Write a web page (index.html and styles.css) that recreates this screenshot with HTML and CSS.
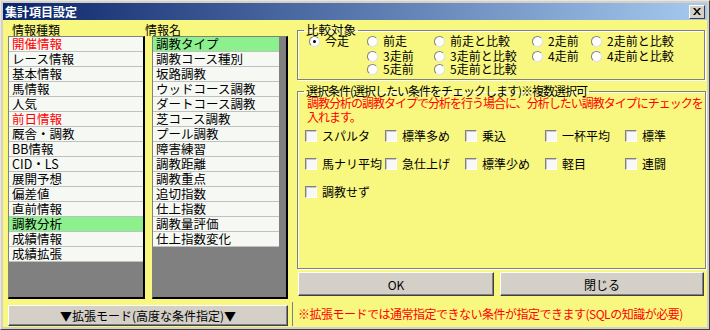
FILE: index.html
```html
<!DOCTYPE html>
<html lang="ja">
<head>
  <meta charset="UTF-8" />
  <title>集計項目設定</title>
  <link rel="stylesheet" href="styles.css">
</head>
<body>
  <div class="window">
    <div class="titlebar">
      <span class="title">集計項目設定</span>
      <span class="close">
        <svg width="8" height="7" viewBox="0 0 8 7"><path d="M0 0h2l2 2.5L6 0h2L5 3.5 8 7H6L4 4.5 2 7H0l3-3.5z" fill="#000"/></svg>
      </span>
    </div>

    <div class="client">
      <div class="left-pane">
        <div class="lists">
          <div class="col col-kind">
            <div class="col-label">情報種類</div>
            <ul class="listbox">
              <li class="red">開催情報</li>
              <li>レース情報</li>
              <li>基本情報</li>
              <li>馬情報</li>
              <li>人気</li>
              <li class="red">前日情報</li>
              <li>厩舎・調教</li>
              <li>BB情報</li>
              <li>CID・LS</li>
              <li>展開予想</li>
              <li>偏差値</li>
              <li>直前情報</li>
              <li class="selected">調教分析</li>
              <li>成績情報</li>
              <li>成績拡張</li>
            </ul>
          </div>
          <div class="col col-name">
            <div class="col-label">情報名</div>
            <ul class="listbox">
              <li class="selected">調教タイプ</li>
              <li>調教コース種別</li>
              <li>坂路調教</li>
              <li>ウッドコース調教</li>
              <li>ダートコース調教</li>
              <li>芝コース調教</li>
              <li>プール調教</li>
              <li>障害練習</li>
              <li>調教距離</li>
              <li>調教重点</li>
              <li>追切指数</li>
              <li>仕上指数</li>
              <li>調教量評価</li>
              <li>仕上指数変化</li>
            </ul>
          </div>
        </div>
        <button class="btn ext-btn" type="button">▼拡張モード(高度な条件指定)▼</button>
      </div>

      <div class="right-pane">
        <fieldset class="group group-compare">
          <legend>比較対象</legend>
          <div class="radio-grid">
            <label class="opt"><span class="radio checked"></span>今走</label>
            <label class="opt"><span class="radio"></span>前走</label>
            <label class="opt"><span class="radio"></span>前走と比較</label>
            <label class="opt"><span class="radio"></span>2走前</label>
            <label class="opt"><span class="radio"></span>2走前と比較</label>
            <span></span>
            <label class="opt"><span class="radio"></span>3走前</label>
            <label class="opt"><span class="radio"></span>3走前と比較</label>
            <label class="opt"><span class="radio"></span>4走前</label>
            <label class="opt"><span class="radio"></span>4走前と比較</label>
            <span></span>
            <label class="opt"><span class="radio"></span>5走前</label>
            <label class="opt"><span class="radio"></span>5走前と比較</label>
          </div>
        </fieldset>

        <fieldset class="group group-cond">
          <legend>選択条件(選択したい条件をチェックします)※複数選択可</legend>
          <p class="desc">調教分析の調教タイプで分析を行う場合に、分析したい調教タイプにチェックを<br>入れます。</p>
          <div class="check-grid">
            <label class="opt"><span class="check"></span>スパルタ</label>
            <label class="opt"><span class="check"></span>標準多め</label>
            <label class="opt"><span class="check"></span>乗込</label>
            <label class="opt"><span class="check"></span>一杯平均</label>
            <label class="opt"><span class="check"></span>標準</label>
            <label class="opt"><span class="check"></span>馬ナリ平均</label>
            <label class="opt"><span class="check"></span>急仕上げ</label>
            <label class="opt"><span class="check"></span>標準少め</label>
            <label class="opt"><span class="check"></span>軽目</label>
            <label class="opt"><span class="check"></span>連闘</label>
            <label class="opt"><span class="check"></span>調教せず</label>
          </div>
        </fieldset>

        <div class="actions">
          <button class="btn ok-btn" type="button">OK</button>
          <button class="btn close-btn" type="button">閉じる</button>
        </div>

        <div class="note">※拡張モードでは通常指定できない条件が指定できます(SQLの知識が必要)</div>
      </div>
    </div>
  </div>
</body>
</html>
```

FILE: styles.css
```css
body {
  margin: 0;
  font-family: "Noto Sans CJK JP", "Noto Sans", sans-serif;
  font-size: 12px;
  color: #000;
}
.window {
  width: 710px;
  height: 330px;
  box-sizing: border-box;
  background: #d4d0c8;
  border: 1px solid;
  border-color: #e8e6e0 #404040 #404040 #e8e6e0;
  padding: 2px;
  display: flex;
  flex-direction: column;
}
.titlebar {
  height: 17px;
  flex-shrink: 0;
  background: linear-gradient(to right, #0a246a, #a6caf0);
  display: flex;
  align-items: center;
  justify-content: space-between;
  padding: 0 2px 0 2px;
  box-sizing: border-box;
}
.title {
  color: #fff;
  font-weight: 700;
  font-size: 12px;
  line-height: 14px;
}
.close {
  width: 16px;
  height: 14px;
  box-sizing: border-box;
  background: #d4d0c8;
  border: 1px solid;
  border-color: #fff #404040 #404040 #fff;
  display: flex;
  align-items: center;
  justify-content: center;
}
.client {
  flex: 1;
  background: #f8f880;
  display: flex;
  padding: 3px 2px 0 5px;
  box-sizing: border-box;
}

/* left side: two list boxes */
.left-pane {
  width: 280px;
  display: flex;
  flex-direction: column;
}
.lists {
  display: flex;
}
.col-label {
  height: 13px;
  line-height: 13px;
}
.col-kind {
  width: 137px;
}
.col-kind .col-label {
  padding-left: 4px;
}
.col-name {
  width: 143px;
}
.col-name .listbox {
  margin-left: 7px;
  width: 136px;
}
.col-name .listbox li {
  width: 126px;
}
.listbox {
  list-style: none;
  margin: 0;
  padding: 0;
  height: 263px;
  box-sizing: border-box;
  background: #808080;
  border-style: solid;
  border-width: 1px 2px 2px 1px;
  border-color: #808080 #000 #000 #808080;
  overflow: hidden;
}
.listbox li {
  height: 15px;
  box-sizing: border-box;
  line-height: 14px;
  font-size: 12.5px;
  padding-left: 3px;
  background: #f6f8f4;
  border-bottom: 1px solid #c0c0c0;
  white-space: nowrap;
}
.listbox li.red {
  color: #f00;
}
.listbox li.selected {
  background: #8cf08c;
}
.btn {
  font-family: inherit;
  font-size: 12px;
  background: #d4d0c8;
  color: #000;
  border: 1px solid;
  border-color: #fff #404040 #404040 #fff;
  box-shadow: inset -1px -1px #808080;
  padding: 0;
  cursor: pointer;
}
.ext-btn {
  margin-top: 6px;
  height: 21px;
  width: 280px;
}

/* right side */
.right-pane {
  width: 408px;
  margin-left: 9px;
  display: flex;
  flex-direction: column;
}
.group {
  margin: 0;
  padding: 0;
  border: 1px solid #808080;
  box-shadow: 1px 1px 0 #fff, inset 1px 1px 0 #fff;
  box-sizing: border-box;
}
.group legend {
  margin-left: 6px;
  padding: 0 2px;
  line-height: 14px;
  font-size: 12.5px;
}
.group-compare {
  height: 57px;
}
.radio-grid {
  margin-top: -4px;
  padding-left: 11px;
  display: grid;
  grid-template-columns: 58px 67px 98px 59px auto;
  grid-template-rows: 16px 14px 12px;
}
.opt {
  display: flex;
  align-items: center;
  gap: 5px;
  white-space: nowrap;
  line-height: 12px;
}
.radio {
  width: 11px;
  height: 11px;
  box-sizing: border-box;
  border-radius: 50%;
  background: #fff;
  border: 1px solid;
  border-color: #808080 #e0e0e0 #e0e0e0 #808080;
  position: relative;
  flex-shrink: 0;
}
.radio.checked::after {
  content: "";
  position: absolute;
  left: 3px;
  top: 3px;
  width: 3px;
  height: 3px;
  border-radius: 50%;
  background: #000;
}
.group-cond {
  height: 185px;
  margin-top: 4px;
}
.group-cond legend {
  font-size: 12px;
  letter-spacing: -1px;
}
.desc {
  margin: -2px 0 0 0;
  padding-left: 9px;
  color: #f00;
  line-height: 14px;
  letter-spacing: -1px;
  white-space: nowrap;
}
.check-grid {
  margin-top: -2px;
  padding-left: 7px;
  display: grid;
  grid-template-columns: repeat(5, 80px);
  grid-template-rows: repeat(3, 28px);
}
.check {
  width: 12px;
  height: 12px;
  box-sizing: border-box;
  background: #f8f8f8;
  border: 1px solid;
  border-color: #808080 #fff #fff #808080;
  box-shadow: inset 1px 1px #c8c8c8;
  flex-shrink: 0;
}
.actions {
  margin-top: 3px;
  display: flex;
  gap: 6px;
  padding-left: 1px;
}
.ok-btn {
  width: 196px;
  height: 24px;
}
.close-btn {
  width: 204px;
  height: 24px;
}
.note {
  margin-top: 6px;
  margin-left: -5px;
  height: 24px;
  line-height: 24px;
  padding-left: 5px;
  border-left: 1px solid #808080;
  color: #f00;
  letter-spacing: -0.5px;
  white-space: nowrap;
}
```
